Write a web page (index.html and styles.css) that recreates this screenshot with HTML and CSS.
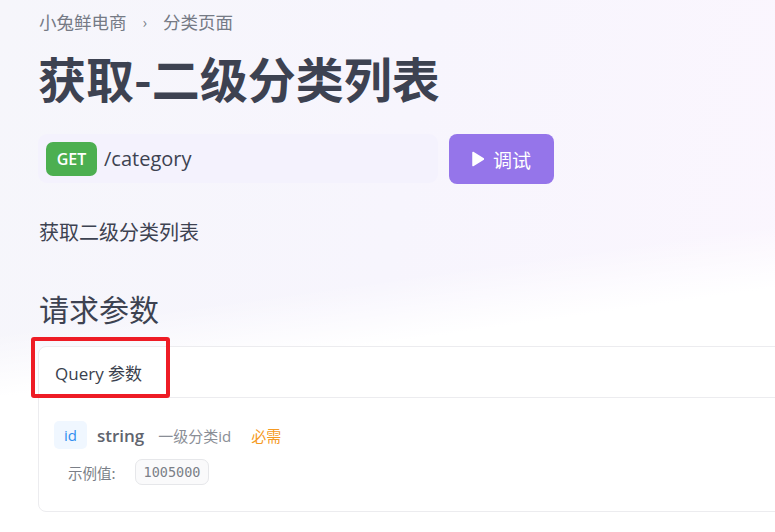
FILE: index.html
```html
<!DOCTYPE html>
<html lang="zh-CN">
<head>
<meta charset="utf-8">
<title>获取-二级分类列表</title>
<link rel="stylesheet" href="styles.css">
</head>
<body>
<div class="page">
  <nav class="crumbs">
    <span>小兔鲜电商</span>
    <span class="sep">›</span>
    <span>分类页面</span>
  </nav>
  <h1 class="title">获取-二级分类列表</h1>
  <div class="endpoint">
    <div class="url-box">
      <span class="method">GET</span>
      <span class="path">/category</span>
    </div>
    <button class="try-btn">
      <svg class="play" width="12" height="16" viewBox="0 0 12 16"><path d="M1 1.5 L11.5 8 L1 14.5 Z" fill="#fff" stroke="#fff" stroke-width="1.5" stroke-linejoin="round"/></svg>
      <span>调试</span>
    </button>
  </div>
  <p class="desc">获取二级分类列表</p>
  <h2 class="section">请求参数</h2>
  <div class="card">
    <div class="card-head">
      <span class="card-title">Query 参数</span>
      <span class="highlight"></span>
    </div>
    <div class="card-body">
      <div class="param-row">
        <span class="param-name">id</span>
        <span class="param-type">string</span>
        <span class="param-desc">一级分类id</span>
        <span class="param-req">必需</span>
      </div>
      <div class="example-row">
        <span class="example-label">示例值:</span>
        <code class="example-val">1005000</code>
      </div>
    </div>
  </div>
</div>
</body>
</html>
```

FILE: styles.css
```css
html, body {
  margin: 0;
  padding: 0;
}
body {
  width: 775px;
  height: 532px;
  overflow: hidden;
  font-family: "Open Sans", "Noto Sans CJK SC", sans-serif;
  color: #3d4251;
  background:
    linear-gradient(172deg, rgba(255,255,255,0) 0%, rgba(255,255,255,0) 52%, #ffffff 62%),
    linear-gradient(100deg, #f6f6fb 0%, #f7f5fd 50%, #fbf6fe 100%);
}
.page {
  padding: 8px 0 0 39px;
}
.crumbs {
  display: flex;
  align-items: center;
  gap: 14px;
  font-family: "Noto Sans CJK SC", sans-serif;
  font-size: 17.5px;
  color: #757a85;
  line-height: 28px;
  height: 28px;
}
.crumbs .sep {
  font-size: 15px;
  margin: 0 2px;
}
.title {
  margin: 10px 0 0 -1px;
  font-family: "Noto Sans CJK SC", sans-serif;
  font-size: 48px;
  font-weight: 700;
  line-height: 62px;
  color: #3d4251;
  letter-spacing: 0;
}
.endpoint {
  display: flex;
  gap: 11px;
  margin-top: 26px;
}
.url-box {
  width: 400px;
  height: 49px;
  box-sizing: border-box;
  margin-left: -1px;
  background: #f4f2fd;
  border-radius: 9px;
  display: flex;
  align-items: center;
  padding-left: 8px;
  gap: 7px;
}
.method {
  background: #4caf50;
  color: #fff;
  font-weight: 600;
  font-size: 16px;
  width: 51px;
  height: 34px;
  border-radius: 7px;
  display: flex;
  align-items: center;
  justify-content: center;
}
.path {
  font-size: 20px;
  color: #3d4251;
}
.try-btn {
  width: 105px;
  height: 50px;
  border: none;
  border-radius: 8px;
  background: #9575ea;
  color: #fff;
  font-family: "Noto Sans CJK SC", sans-serif;
  font-size: 19px;
  display: flex;
  align-items: center;
  justify-content: center;
  gap: 9px;
  padding: 0;
}
.desc {
  margin: 34px 0 0 0;
  font-family: "Noto Sans CJK SC", sans-serif;
  font-size: 20px;
  line-height: 28px;
  color: #3d4251;
}
.section {
  margin: 42px 0 0 0;
  font-family: "Noto Sans CJK SC", sans-serif;
  font-size: 30px;
  font-weight: 400;
  line-height: 40px;
  color: #3d4251;
}
.card {
  margin-top: 18px;
  margin-left: -1px;
  width: 820px;
  border: 1px solid #ececef;
  border-radius: 8px;
  background: #fff;
}
.card-head {
  position: relative;
  height: 50px;
  display: flex;
  align-items: center;
  padding-left: 16px;
  border-bottom: 1px solid #ececef;
}
.card-title {
  font-size: 17px;
  font-weight: 400;
  color: #3a3f4d;
}
.highlight {
  position: absolute;
  left: -8px;
  top: -10px;
  width: 131px;
  height: 53px;
  border: 4px solid #ee1c25;
  border-radius: 3px;
}
.card-body {
  padding: 23px 15px 26px 15px;
}
.param-row {
  display: flex;
  align-items: center;
  height: 28px;
}
.param-name {
  background: #f0f7ff;
  color: #2f8ef0;
  font-size: 15px;
  height: 28px;
  padding: 0 10px;
  border-radius: 5px;
  display: flex;
  align-items: center;
}
.param-type {
  margin-left: 10px;
  font-size: 17px;
  font-weight: 600;
  color: #60646e;
}
.param-desc {
  margin-left: 14px;
  font-size: 15px;
  color: #8a8e96;
}
.param-req {
  margin-left: 20px;
  font-size: 15px;
  color: #f59a23;
}
.example-row {
  display: flex;
  align-items: center;
  margin-top: 10px;
  padding-left: 14px;
}
.example-label {
  font-size: 14.5px;
  color: #7b7f88;
  font-family: "Noto Sans CJK SC", sans-serif;
}
.example-val {
  margin-left: 19px;
  font-family: "DejaVu Sans Mono", monospace;
  font-size: 13.5px;
  color: #7b7f88;
  background: #fafafb;
  border: 1px solid #e6e7ea;
  border-radius: 7px;
  height: 26px;
  box-sizing: border-box;
  padding: 0 8px;
  display: flex;
  align-items: center;
}
```
